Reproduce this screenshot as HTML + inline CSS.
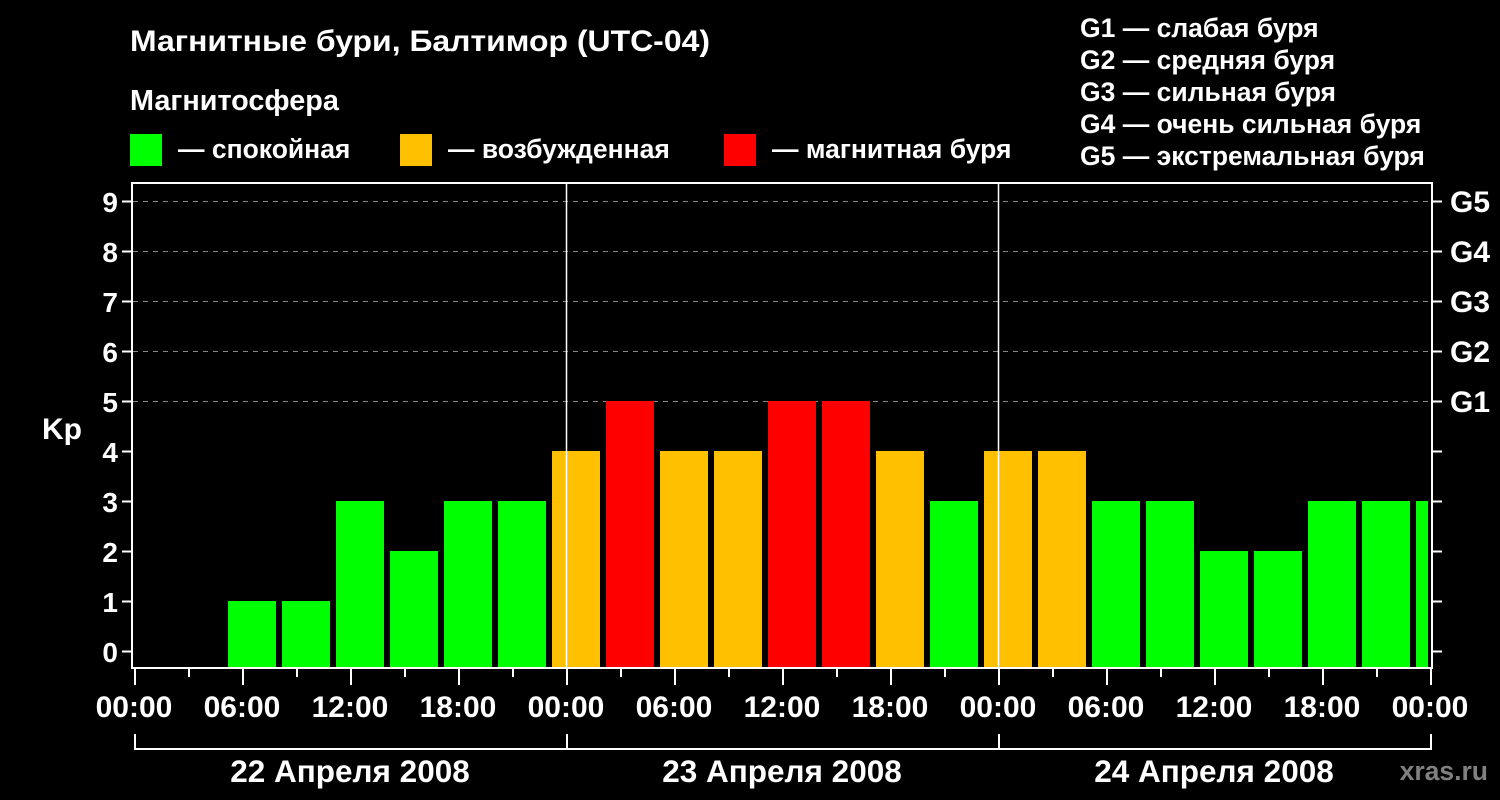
<!DOCTYPE html>
<html><head><meta charset="utf-8"><style>html,body{margin:0;background:#000;}svg{display:block}</style></head><body>
<svg width="1500" height="800" xmlns="http://www.w3.org/2000/svg" font-family="'Liberation Sans', Arial, sans-serif" font-weight="bold" fill="#fff">
<rect width="1500" height="800" fill="#000"/>
<text x="130" y="51" font-size="30" textLength="580" lengthAdjust="spacingAndGlyphs">Магнитные бури, Балтимор (UTC-04)</text>
<text x="130" y="110" font-size="28.8">Магнитосфера</text>
<rect x="130" y="134" width="32" height="32" fill="#00ff00"/>
<text x="178" y="158" font-size="26.5">— спокойная</text>
<rect x="400" y="134" width="32" height="32" fill="#ffc000"/>
<text x="448" y="158" font-size="26.5">— возбужденная</text>
<rect x="724" y="134" width="32" height="32" fill="#ff0000"/>
<text x="772" y="158" font-size="26.5">— магнитная буря</text>
<g font-size="26.5">
<text x="1080" y="37">G1 — слабая буря</text>
<text x="1080" y="69">G2 — средняя буря</text>
<text x="1080" y="101">G3 — сильная буря</text>
<text x="1080" y="133">G4 — очень сильная буря</text>
<text x="1080" y="165">G5 — экстремальная буря</text>
</g>
<g stroke="#888" stroke-width="1" stroke-dasharray="5,5">
<line x1="133" y1="201.5" x2="1431" y2="201.5"/><line x1="133" y1="251.5" x2="1431" y2="251.5"/>
<line x1="133" y1="301.5" x2="1431" y2="301.5"/><line x1="133" y1="351.5" x2="1431" y2="351.5"/>
<line x1="133" y1="401.5" x2="1431" y2="401.5"/>
</g>
<g>
<rect x="228" y="601" width="48" height="67" fill="#00ff00"/>
<rect x="282" y="601" width="48" height="67" fill="#00ff00"/>
<rect x="336" y="501" width="48" height="167" fill="#00ff00"/>
<rect x="390" y="551" width="48" height="117" fill="#00ff00"/>
<rect x="444" y="501" width="48" height="167" fill="#00ff00"/>
<rect x="498" y="501" width="48" height="167" fill="#00ff00"/>
<rect x="552" y="451" width="48" height="217" fill="#ffc000"/>
<rect x="606" y="401" width="48" height="267" fill="#ff0000"/>
<rect x="660" y="451" width="48" height="217" fill="#ffc000"/>
<rect x="714" y="451" width="48" height="217" fill="#ffc000"/>
<rect x="768" y="401" width="48" height="267" fill="#ff0000"/>
<rect x="822" y="401" width="48" height="267" fill="#ff0000"/>
<rect x="876" y="451" width="48" height="217" fill="#ffc000"/>
<rect x="930" y="501" width="48" height="167" fill="#00ff00"/>
<rect x="984" y="451" width="48" height="217" fill="#ffc000"/>
<rect x="1038" y="451" width="48" height="217" fill="#ffc000"/>
<rect x="1092" y="501" width="48" height="167" fill="#00ff00"/>
<rect x="1146" y="501" width="48" height="167" fill="#00ff00"/>
<rect x="1200" y="551" width="48" height="117" fill="#00ff00"/>
<rect x="1254" y="551" width="48" height="117" fill="#00ff00"/>
<rect x="1308" y="501" width="48" height="167" fill="#00ff00"/>
<rect x="1362" y="501" width="48" height="167" fill="#00ff00"/>
<rect x="1416" y="501" width="12" height="167" fill="#00ff00"/>
</g>
<g stroke="#fff" fill="none" stroke-width="2">
<rect x="132" y="183" width="1300" height="485"/>
<line x1="566.5" y1="183" x2="566.5" y2="668" stroke-width="1.5"/>
<line x1="998.5" y1="183" x2="998.5" y2="668" stroke-width="1.5"/>
<path d="M122 201.5H132M122 251.5H132M122 301.5H132M122 351.5H132M122 401.5H132M122 451.5H132M122 501.5H132M122 551.5H132M122 601.5H132M122 651.5H132"/>
<path d="M1432 201.5H1442M1432 251.5H1442M1432 301.5H1442M1432 351.5H1442M1432 401.5H1442M1432 451.5H1442M1432 501.5H1442M1432 551.5H1442M1432 601.5H1442M1432 651.5H1442"/>
<path d="M135 668V685M243 668V685M351 668V685M459 668V685M567 668V685M675 668V685M783 668V685M891 668V685M999 668V685M1107 668V685M1215 668V685M1323 668V685M1431 668V685"/>
<path d="M189 668V677M297 668V677M405 668V677M513 668V677M621 668V677M729 668V677M837 668V677M945 668V677M1053 668V677M1161 668V677M1269 668V677M1377 668V677"/>
<path d="M135 734V749H1431V734M567 734V749M999 734V749"/>
</g>
<g font-size="28" text-anchor="end">
<text x="118" y="212">9</text><text x="118" y="262">8</text><text x="118" y="312">7</text><text x="118" y="362">6</text><text x="118" y="412">5</text><text x="118" y="462">4</text><text x="118" y="512">3</text><text x="118" y="562">2</text><text x="118" y="612">1</text><text x="118" y="662">0</text>
</g>
<g font-size="30">
<text x="1450" y="212">G5</text><text x="1450" y="262">G4</text><text x="1450" y="312">G3</text><text x="1450" y="362">G2</text><text x="1450" y="412">G1</text>
</g>
<text x="42" y="439" font-size="30">Kp</text>
<g font-size="30" text-anchor="middle">
<text x="134" y="717">00:00</text><text x="242" y="717">06:00</text><text x="350" y="717">12:00</text><text x="458" y="717">18:00</text>
<text x="566" y="717">00:00</text><text x="674" y="717">06:00</text><text x="782" y="717">12:00</text><text x="890" y="717">18:00</text>
<text x="998" y="717">00:00</text><text x="1106" y="717">06:00</text><text x="1214" y="717">12:00</text><text x="1322" y="717">18:00</text>
<text x="1430" y="717">00:00</text>
</g>
<g font-size="31.5" text-anchor="middle">
<text x="350" y="782">22 Апреля 2008</text><text x="782" y="782">23 Апреля 2008</text><text x="1214" y="782">24 Апреля 2008</text>
</g>
<text x="1488" y="780" font-size="26.5" text-anchor="end" fill="#808080">xras.ru</text>
</svg>
</body></html>
